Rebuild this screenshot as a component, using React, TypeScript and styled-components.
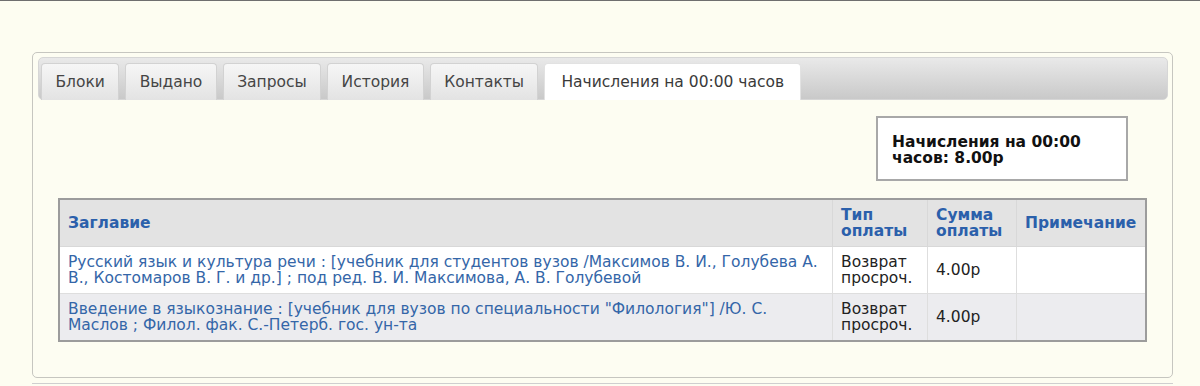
import styled, { createGlobalStyle } from 'styled-components';

const GlobalStyle = createGlobalStyle`
  html, body { margin: 0; padding: 0; }
  body {
    background: #fdfdf1;
    border-top: 1px solid #6f6f6f;
    font-family: "DejaVu Sans", Verdana, sans-serif;
    font-size: 15.5px;
    color: #222;
  }
`;

const Page = styled.div`
  padding: 51px 27px 0 32px;
`;

const Panel = styled.section`
  border: 1px solid #c6c6c0;
  border-radius: 5px;
  padding: 4px 4px 0 5px;
  height: 326px;
  box-sizing: border-box;
  background: #fdfdf2;
`;

const TabBar = styled.ul`
  display: flex;
  gap: 6px;
  margin: 0;
  list-style: none;
  height: 43px;
  box-sizing: border-box;
  padding: 5px 2px 0 2px;
  border: 1px solid #d6d6d6;
  border-radius: 5px;
  background: linear-gradient(#e9e9e9, #c9c9c9);
`;

const Tab = styled.li<{ $active?: boolean }>`
  display: flex;
  align-items: center;
  height: 37px;
  box-sizing: border-box;
  padding: 0 ${p => (p.$active ? '16px' : '13.4px')};
  border: 1px solid ${p => (p.$active ? '#e2e2e2' : '#d2d2d2')};
  border-bottom: none;
  border-radius: 4px 4px 0 0;
  background: ${p => (p.$active ? '#fff' : 'linear-gradient(#f6f6f6, #e3e3e3)')};
  color: ${p => (p.$active ? '#3a3a3a' : '#454545')};
  white-space: nowrap;
`;

const Content = styled.div`
  padding: 16px 21px 0 20px;
  display: flex;
  flex-direction: column;
`;

const Summary = styled.div`
  align-self: flex-end;
  margin-right: 19px;
  width: 252px;
  height: 65px;
  box-sizing: border-box;
  border: 2px solid #a8a8a8;
  background: #fff;
  padding: 16px 12px 0 14px;
  font-weight: bold;
  color: #111;
  line-height: 16px;
`;

const Table = styled.table`
  margin-top: 17px;
  width: 100%;
  border-collapse: collapse;
  border: 2px solid #9c9c9c;
`;

const Th = styled.th<{ $w?: number }>`
  width: ${p => (p.$w ? `${p.$w}px` : 'auto')};
  height: 46px;
  padding: 0 8px;
  text-align: left;
  background: #e3e3e3;
  color: #2b60ab;
  font-weight: bold;
  line-height: 16px;
  border: 1px solid #d8d8d8;
  border-top: none;
`;

const Row = styled.tr<{ $alt?: boolean }>`
  background: ${p => (p.$alt ? '#ececef' : '#fff')};
`;

const Td = styled.td`
  height: 46px;
  padding: 0 8px;
  line-height: 16px;
  border: 1px solid #dedede;
  vertical-align: middle;
`;

const TitleLink = styled.a`
  color: #3466a8;
  text-decoration: none;
`;

const BottomRule = styled.div`
  margin: 5px 27px 0 32px;
  border-top: 1px solid #cfcfcf;
`;

const tabs = ['Блоки', 'Выдано', 'Запросы', 'История', 'Контакты', 'Начисления на 00:00 часов'];

const rows = [
  {
    title:
      'Русский язык и культура речи : [учебник для студентов вузов /Максимов В. И., Голубева А. В., Костомаров В. Г. и др.] ; под ред. В. И. Максимова, А. В. Голубевой',
    type: 'Возврат просроч.',
    sum: '4.00р',
  },
  {
    title:
      'Введение в языкознание : [учебник для вузов по специальности "Филология"] /Ю. С. Маслов ; Филол. фак. С.-Петерб. гос. ун-та',
    type: 'Возврат просроч.',
    sum: '4.00р',
  },
];

export default function App() {
  return (
    <>
      <GlobalStyle />
      <Page>
        <Panel>
          <TabBar>
            {tabs.map((t, i) => (
              <Tab key={t} $active={i === tabs.length - 1}>{t}</Tab>
            ))}
          </TabBar>
          <Content>
            <Summary>Начисления на 00:00 часов: 8.00р</Summary>
            <Table>
              <thead>
                <tr>
                  <Th>Заглавие</Th>
                  <Th $w={78}>Тип оплаты</Th>
                  <Th $w={72}>Сумма оплаты</Th>
                  <Th $w={112}>Примечание</Th>
                </tr>
              </thead>
              <tbody>
                {rows.map((r, i) => (
                  <Row key={i} $alt={i % 2 === 1}>
                    <Td><TitleLink href="#">{r.title}</TitleLink></Td>
                    <Td>{r.type}</Td>
                    <Td>{r.sum}</Td>
                    <Td />
                  </Row>
                ))}
              </tbody>
            </Table>
          </Content>
        </Panel>
      </Page>
      <BottomRule />
    </>
  );
}
